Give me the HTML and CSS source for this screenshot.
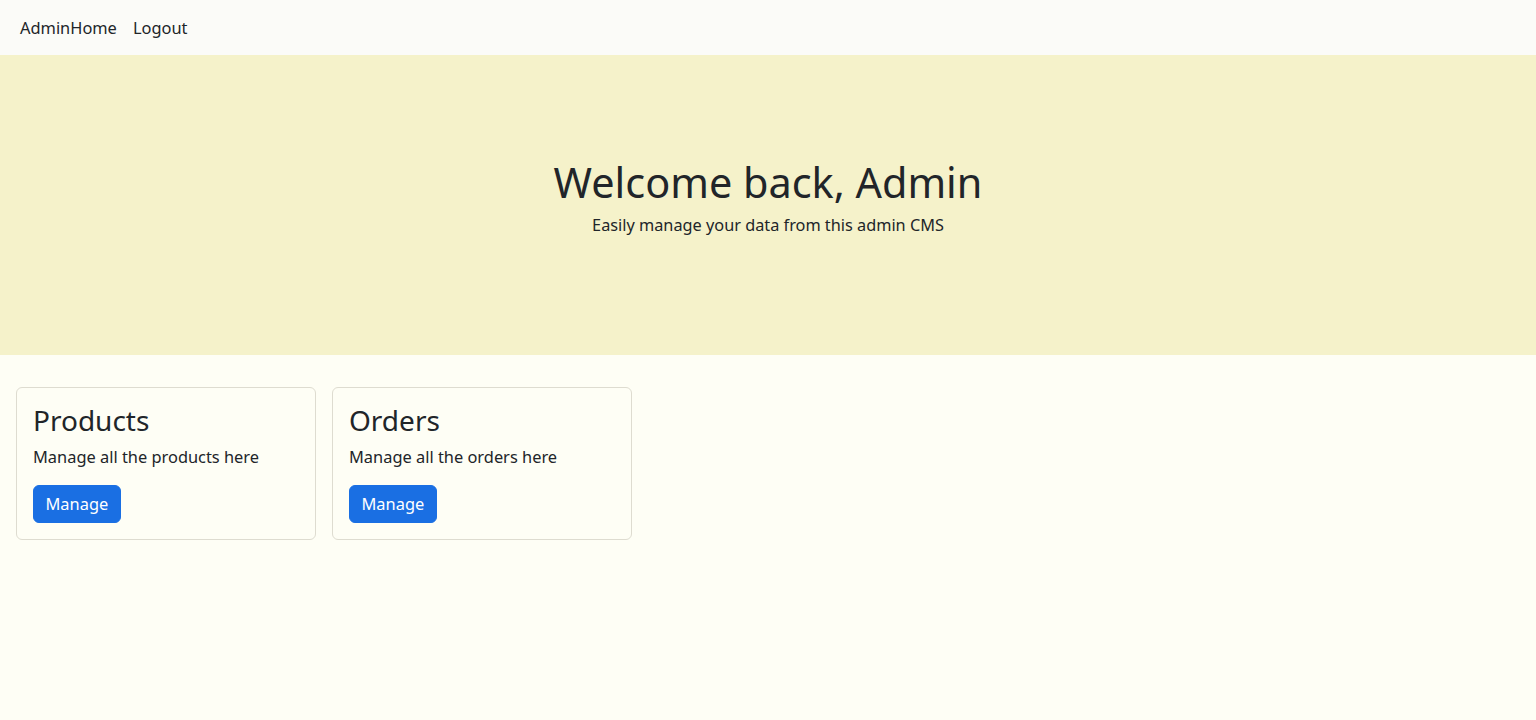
FILE: index.html
```html
<!DOCTYPE html>
<html lang="en">
<head>
<meta charset="utf-8">
<title>Admin</title>
<link rel="stylesheet" href="styles.css">
</head>
<body>
<nav class="navbar">
  <a class="nav-link" href="#">AdminHome</a>
  <a class="nav-link" href="#">Logout</a>
</nav>
<header class="hero">
  <h1 class="hero-title">Welcome back, Admin</h1>
  <p class="hero-sub">Easily manage your data from this admin CMS</p>
</header>
<main class="cards">
  <div class="card">
    <h2 class="card-title">Products</h2>
    <p class="card-text">Manage all the products here</p>
    <a class="btn" href="#">Manage</a>
  </div>
  <div class="card">
    <h2 class="card-title">Orders</h2>
    <p class="card-text">Manage all the orders here</p>
    <a class="btn" href="#">Manage</a>
  </div>
</main>
</body>
</html>
```
FILE: styles.css
```css
* { box-sizing: border-box; }
html, body { margin: 0; }
body {
  font-family: "Noto Sans", "Open Sans", sans-serif;
  font-size: 16.4px;
  line-height: 24px;
  color: #212529;
  background: #fefef5;
}
.navbar {
  display: flex;
  height: 55px;
  align-items: center;
  padding: 0 12px;
  background: #fbfbf8;
}
.nav-link {
  color: #212529;
  text-decoration: none;
  padding: 8px;
}
.hero {
  height: 300px;
  background: #f5f2ca;
  display: flex;
  flex-direction: column;
  align-items: center;
  justify-content: center;
  padding-bottom: 16px;
}
.hero-title {
  margin: 0 0 7px;
  font-size: 41.4px;
  line-height: 48px;
  font-weight: 400;
}
.hero-sub { margin: 0; font-size: 16.3px; }
.cards {
  display: flex;
  gap: 16px;
  padding: 32px 16px;
}
.card {
  width: 300px;
  border: 1px solid #dedcd0;
  border-radius: 6px;
  padding: 16px;
}
.card-title {
  margin: 0 0 8px;
  font-size: 28px;
  line-height: 33px;
  font-weight: 400;
}
.card-text { margin: 0 0 16px; }
.btn {
  display: inline-block;
  background: #1a6fe3;
  color: #fff;
  text-decoration: none;
  padding: 6px 12px 6px 11.5px;
  border-radius: 6px;
  line-height: 24px;
  border: 1px solid #1a6fe3;
}
```
